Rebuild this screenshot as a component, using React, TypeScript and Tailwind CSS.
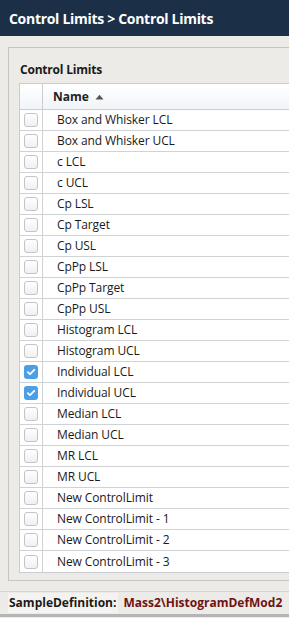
import React from "react";

const rows: { name: string; checked?: boolean }[] = [
  { name: "Box and Whisker LCL" },
  { name: "Box and Whisker UCL" },
  { name: "c LCL" },
  { name: "c UCL" },
  { name: "Cp LSL" },
  { name: "Cp Target" },
  { name: "Cp USL" },
  { name: "CpPp LSL" },
  { name: "CpPp Target" },
  { name: "CpPp USL" },
  { name: "Histogram LCL" },
  { name: "Histogram UCL" },
  { name: "Individual LCL", checked: true },
  { name: "Individual UCL", checked: true },
  { name: "Median LCL" },
  { name: "Median UCL" },
  { name: "MR LCL" },
  { name: "MR UCL" },
  { name: "New ControlLimit" },
  { name: "New ControlLimit - 1" },
  { name: "New ControlLimit - 2" },
  { name: "New ControlLimit - 3" },
];

function Box({ checked }: { checked?: boolean }) {
  if (checked) {
    return (
      <div className="w-[14px] h-[14px] rounded-[3px] bg-[#4a9fe6] flex items-center justify-center">
        <svg width="10" height="10" viewBox="0 0 10 10">
          <path d="M1.8 5.2 L4 7.2 L8.3 2.8" fill="none" stroke="white" strokeWidth="1.8" strokeLinecap="round" strokeLinejoin="round" />
        </svg>
      </div>
    );
  }
  return (
    <div className="w-[14px] h-[14px] rounded-[3px] border border-[#c4c4c4] bg-gradient-to-b from-[#ffffff] to-[#f0f0f0]" />
  );
}

export default function App() {
  return (
    <div className="w-[289px] h-[618px] overflow-hidden bg-[#edebe7] flex flex-col" style={{ fontFamily: '"Open Sans", "Noto Sans", sans-serif' }}>
      <div className="h-[36px] shrink-0 bg-[#1b3047] flex items-center pl-[9px]">
        <span className="text-white font-bold text-[14px] tracking-[-0.3px]">Control Limits &gt; Control Limits</span>
      </div>
      <div className="flex-1 pt-[11px] flex flex-col">
        <div className="ml-[8px] h-[534px] border-t border-l border-b border-[#c4c4c4] pl-[10px] flex flex-col">
          <div className="h-[35px] shrink-0 flex items-center pl-[1px] pt-[9px]">
            <span className="font-bold text-[12px] text-[#1a1a1a] tracking-[-0.2px]">Control Limits</span>
          </div>
          <div className="border-t border-l border-b border-[#c9cdd1] bg-white flex flex-col">
            <div className="h-[26px] flex bg-gradient-to-b from-[#ffffff] to-[#f1f4f8] border-b border-[#c9cdd1]">
              <div className="w-[23px] shrink-0 border-r border-[#c9cdd1]" />
              <div className="flex items-center pl-[10px] gap-[6px]">
                <span className="font-bold text-[12px] text-[#222]">Name</span>
                <svg width="9" height="6" viewBox="0 0 9 6"><path d="M0.5 5.5 L4.5 0.8 L8.5 5.5 Z" fill="#555" /></svg>
              </div>
            </div>
            {rows.map((r, i) => (
              <div key={i} className={`h-[21px] flex ${i < rows.length - 1 ? "border-b border-[#d0d3d6]" : ""}`}>
                <div className="w-[23px] shrink-0 border-r border-[#d0d3d6] flex items-center justify-center">
                  <Box checked={r.checked} />
                </div>
                <div className="flex items-center pl-[14px] text-[12px] text-[#1a1a1a] tracking-[-0.1px]">{r.name}</div>
              </div>
            ))}
          </div>
        </div>
        <div className="mt-[10px] border-t border-[#d6d4d0] h-[26px] flex items-center pl-[8px] border-b-[3px] border-b-[#b5b5b5]">
          <div className="h-[20px] bg-[#f4f3f1] flex items-center pl-[1px] pr-[2px]">
            <span className="font-bold text-[12px] text-[#1a1a1a]">SampleDefinition:</span>
          </div>
          <span className="ml-[5px] font-bold text-[12px] text-[#6e1414] whitespace-nowrap">Mass2\HistogramDefMod2</span>
        </div>
      </div>
    </div>
  );
}
